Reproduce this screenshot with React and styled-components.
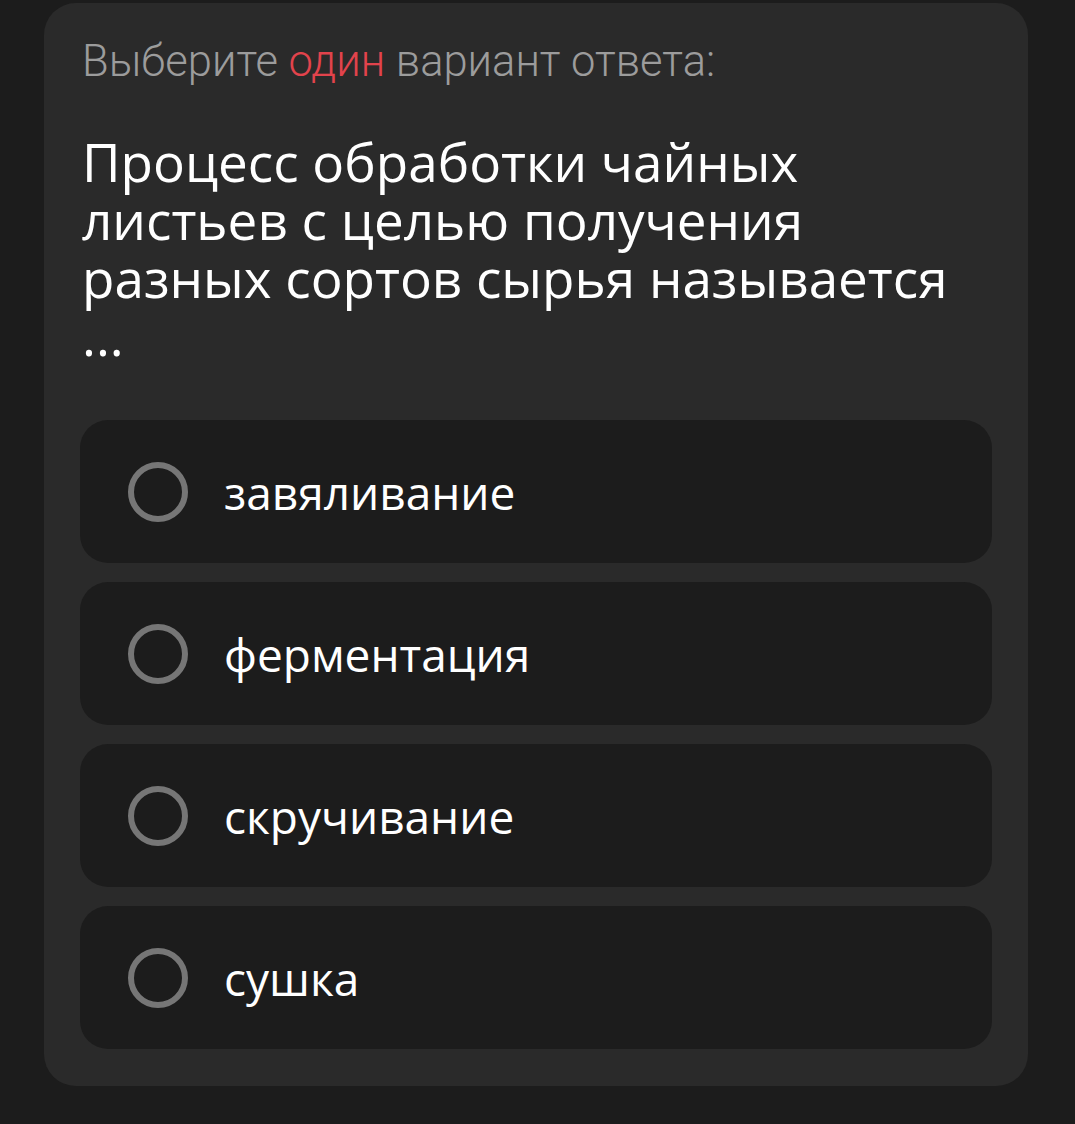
import React from "react";
import styled, { createGlobalStyle } from "styled-components";

const GlobalStyle = createGlobalStyle`
  html, body {
    margin: 0;
    padding: 0;
    background: #1c1c1c;
  }
  body {
    font-family: "Open Sans", "Noto Sans", sans-serif;
  }
`;

const Page = styled.div`
  padding: 3px 47px 40px 44px;
`;

const Card = styled.div`
  background: #2a2a2a;
  border-radius: 32px;
  padding: 37px 36px 37px 36px;
  display: flex;
  flex-direction: column;
`;

const Hint = styled.div`
  font-family: "Roboto", sans-serif;
  font-weight: 300;
  font-size: 43.5px;
  color: #9c9c9c;
  padding-left: 2px;
  line-height: 44px;
  .accent {
    color: #e2434c;
  }
`;

const Question = styled.div`
  margin-top: 49px;
  font-family: "Open Sans", sans-serif;
  font-size: 53px;
  line-height: 58px;
  color: #ffffff;
  padding-left: 2px;
  padding-right: 20px;
`;

const Options = styled.div`
  margin-top: 55px;
  display: flex;
  flex-direction: column;
  gap: 19px;
`;

const Option = styled.label`
  display: flex;
  align-items: center;
  height: 143px;
  background: #1c1c1c;
  border-radius: 28px;
  padding-left: 48px;
  gap: 36px;
  cursor: pointer;
`;

const Radio = styled.span`
  width: 48px;
  height: 48px;
  border: 6px solid #767676;
  border-radius: 50%;
  flex-shrink: 0;
`;

const OptionText = styled.span`
  font-family: "Open Sans", sans-serif;
  font-size: 46px;
  color: #ffffff;
  line-height: 1;
`;

const answers = ["завяливание", "ферментация", "скручивание", "сушка"];

export default function App() {
  return (
    <>
      <GlobalStyle />
      <Page>
        <Card>
          <Hint>
            Выберите <span className="accent">один</span> вариант ответа:
          </Hint>
          <Question>
            Процесс обработки чайных листьев с целью получения разных сортов
            сырья называется ...
          </Question>
          <Options>
            {answers.map((a) => (
              <Option key={a}>
                <Radio />
                <OptionText>{a}</OptionText>
              </Option>
            ))}
          </Options>
        </Card>
      </Page>
    </>
  );
}
